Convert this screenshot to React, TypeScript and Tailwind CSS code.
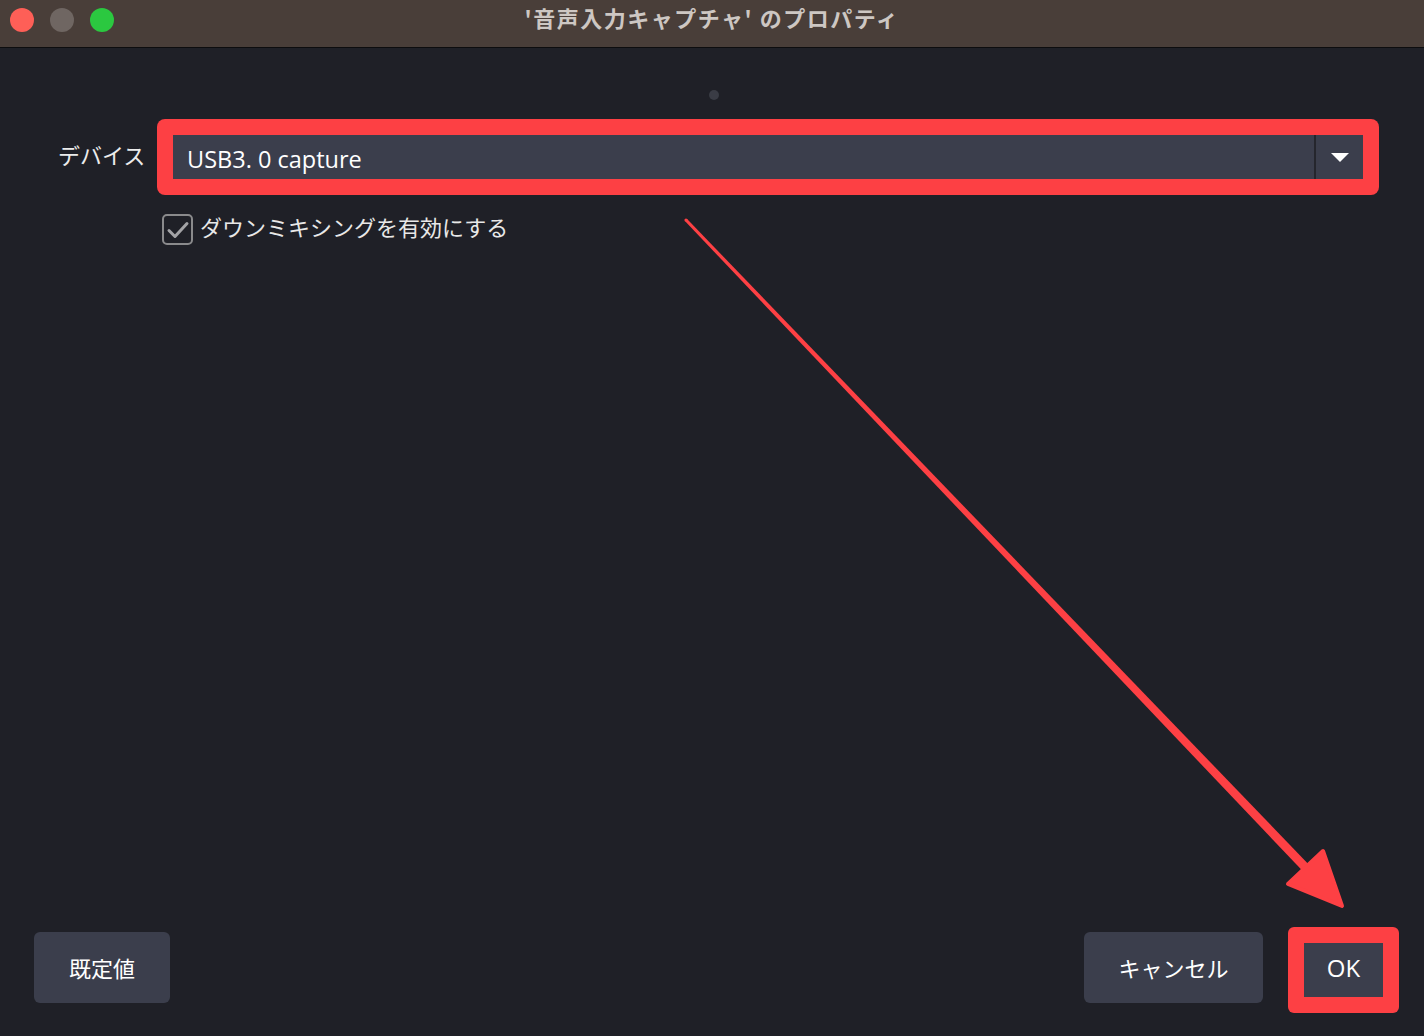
import React from "react";

const jp = { fontFamily: '"Noto Sans CJK JP", "Noto Sans", sans-serif' };
const latin = { fontFamily: '"Open Sans", "Noto Sans CJK JP", sans-serif' };

function Arrow() {
  return (
    <svg
      className="absolute inset-0 pointer-events-none"
      width="1424"
      height="1036"
      viewBox="0 0 1424 1036"
    >
      <polygon
        points="684.9,221 687.1,219 1307.75,863.4 1301.25,869.6"
        fill="#fd4044"
      />
      <circle cx="686" cy="220" r="1.6" fill="#fd4044" />
      <polygon
        points="1342,906 1288,884 1323,851"
        fill="#fd4044"
        stroke="#fd4044"
        strokeWidth="4"
        strokeLinejoin="round"
      />
    </svg>
  );
}

export default function App() {
  return (
    <div className="relative w-[1424px] h-[1036px] overflow-hidden flex flex-col bg-[#1f2027]" style={jp}>
      {/* Title bar */}
      <div className="relative h-[48px] shrink-0 bg-[#493e39] border-b border-[#0d0d0f] flex items-center justify-center">
        <div className="absolute left-[10px] top-[8px] flex gap-[16px]">
          <div className="w-[24px] h-[24px] rounded-full bg-[#fe5f57]" />
          <div className="w-[24px] h-[24px] rounded-full bg-[#6f6662]" />
          <div className="w-[24px] h-[24px] rounded-full bg-[#2bc840]" />
        </div>
        <div className="text-[22px] font-bold text-[#cdc7c3] tracking-[1.5px] -mt-[13px] leading-none">
          '音声入力キャプチャ' のプロパティ
        </div>
      </div>

      {/* Body */}
      <div className="flex-1 flex flex-col">
        <div className="pt-[42px] pl-[4px] flex justify-center">
          <div className="w-[10px] h-[10px] rounded-full bg-[#3a3c45]" />
        </div>

        <div className="mt-[19px] pl-[58px] pr-[45px] flex items-center gap-[11px]">
          <div className="w-[88px] text-[22px] text-[#ececec] whitespace-nowrap leading-none -mt-[7px]">デバイス</div>
          <div className="flex-1 bg-[#fd4044] rounded-[8px] p-[16px]">
            <div className="h-[44px] bg-[#3b3e4c] flex items-center">
              <div className="flex-1 pl-[14px] pt-[5px] text-[23.5px] text-white leading-none" style={latin}>
                USB3. 0 capture
              </div>
              <div className="w-[2px] h-full bg-[#25262d]" />
              <div className="w-[47px] h-full flex items-center justify-center">
                <svg width="18" height="9" viewBox="0 0 18 9">
                  <polygon points="0,0 18,0 9,9" fill="#ffffff" />
                </svg>
              </div>
            </div>
          </div>
        </div>

        <div className="mt-[19px] pl-[162px] flex items-center gap-[7px]">
          <div className="w-[31px] h-[31px] rounded-[5px] border-2 border-[#8a8a8c] flex items-center justify-center">
            <svg width="24" height="20" viewBox="0 0 24 20">
              <polyline
                points="3,10.5 9,16.5 21,3.5"
                fill="none"
                stroke="#a3a3a6"
                strokeWidth="3"
                strokeLinecap="round"
                strokeLinejoin="round"
              />
            </svg>
          </div>
          <div className="text-[22px] text-[#e8e8e8] leading-none -mt-[7px]">ダウンミキシングを有効にする</div>
        </div>

        <div className="flex-1" />

        <div className="pl-[34px] pr-[25px] pb-[23px] flex items-start">
          <div className="mt-[5px] w-[136px] h-[71px] rounded-[6px] bg-[#3b3e4c] flex items-center justify-center text-[22px] text-white">
            既定値
          </div>
          <div className="flex-1" />
          <div className="mt-[5px] w-[179px] h-[71px] rounded-[6px] bg-[#3b3e4c] flex items-center justify-center text-[22px] text-white">
            キャンセル
          </div>
          <div className="ml-[25px] w-[111px] h-[86px] rounded-[6px] bg-[#fd4044] p-[16px]">
            <div className="w-full h-full bg-[#3b3e4c] flex items-center justify-center text-[24px] text-white leading-none pb-[4px]" style={latin}>
              OK
            </div>
          </div>
        </div>
      </div>

      <Arrow />
    </div>
  );
}
